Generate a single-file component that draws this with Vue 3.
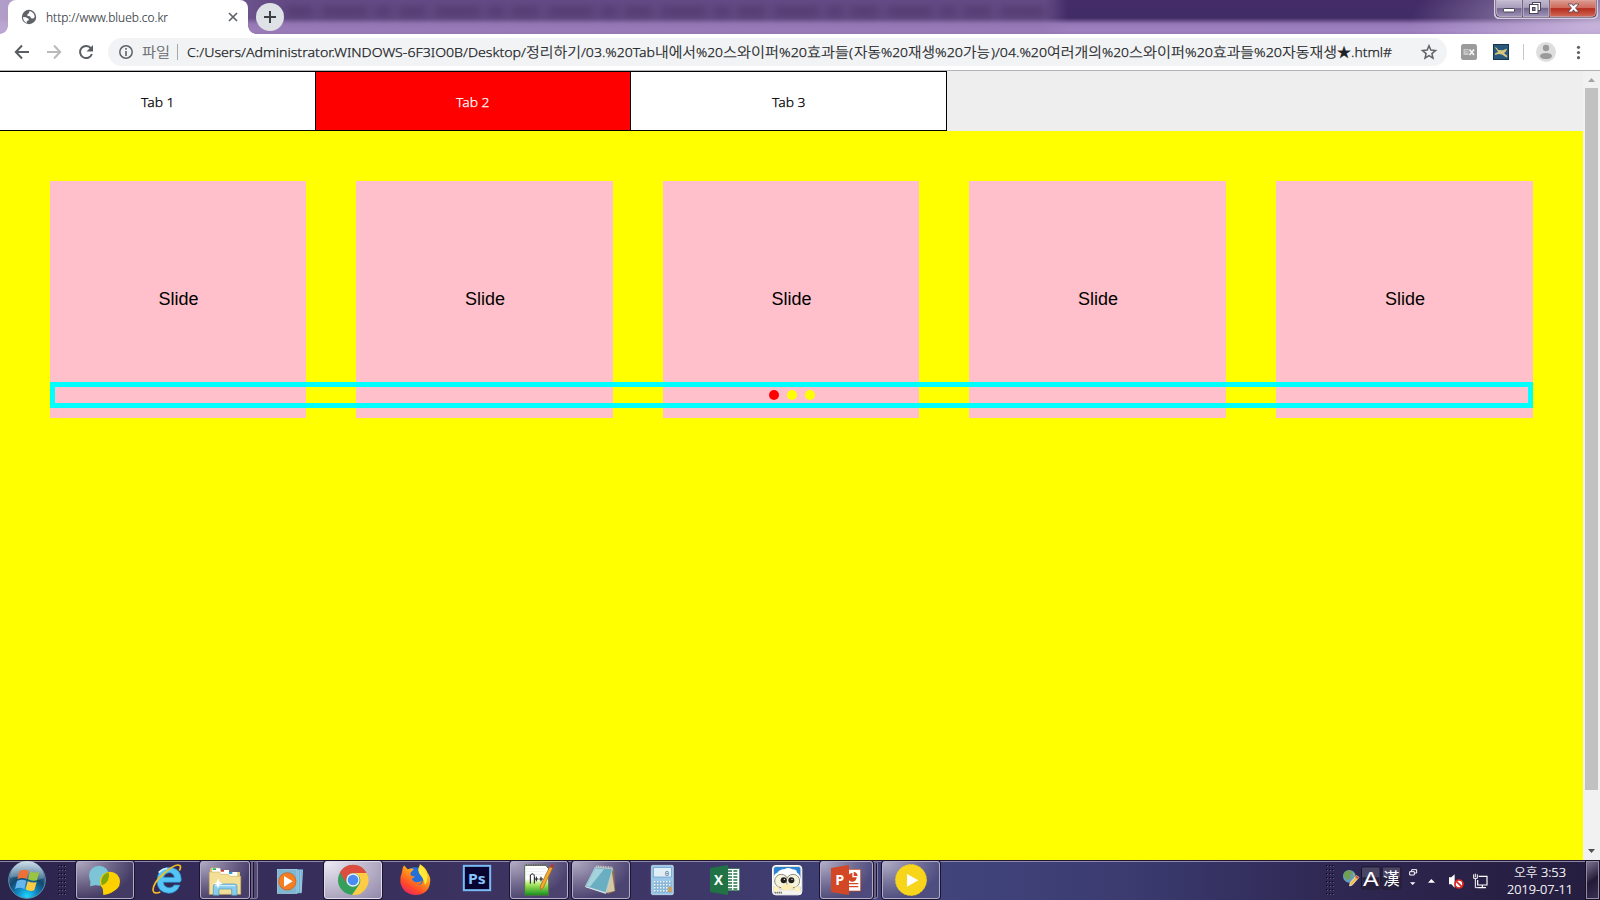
<script setup>
const urlParts = [
  ['C:/Users/Administrator.WINDOWS-6F3IO0B/Desktop/', 187, 339],
  ['정리하기', 526, 55],
  ['/03.%20Tab', 581, 74],
  ['내에서', 655, 41],
  ['%20', 696, 27],
  ['스와이퍼', 723, 56],
  ['%20', 779, 28],
  ['효과들', 807, 42],
  ['(', 849, 4],
  ['자동', 854, 27],
  ['%20', 881, 27],
  ['재생', 908, 27],
  ['%20', 935, 28],
  ['가능', 963, 27],
  [')/04.%20', 991, 56],
  ['여러개의', 1047, 55],
  ['%20', 1102, 27],
  ['스와이퍼', 1129, 56],
  ['%20', 1185, 28],
  ['효과들', 1213, 41],
  ['%20', 1254, 28],
  ['자동재생', 1282, 55],
  ['★', 1337, 14],
  ['.html#', 1351, 41],
]
const tabs = ['Tab 1', 'Tab 2', 'Tab 3']
const active = 1
const gripRows = [0, 1, 2, 3, 4, 5, 6, 7]
const gripCols = [0, 1, 2]
</script>

<template>
  <div class="screen">
    <header class="titlebar">
      <div class="glass-smudge"></div>
      <div class="browser-tab">
        <svg class="globe" width="16" height="16" viewBox="0 0 16 16">
          <circle cx="8" cy="8" r="7.2" fill="#5f6368" />
          <path d="M2 8 L5 8.3 7.8 10 7.5 11.5 5.8 12 6 14 C3.5 13 2 11 2 8Z M8.5 2 L8 4 6.3 5.5 6.5 7 9 7.2 10 9.2 12.3 9.5 13.7 8 C13.5 5 11.5 2.5 8.5 2Z" fill="#fff" />
        </svg>
        <svg class="tab-title" width="140" height="24"><text x="1" y="16.500" textLength="122" lengthAdjust="spacingAndGlyphs">http://www.blueb.co.kr</text></svg>
        <svg class="tab-close" width="10" height="10" viewBox="0 0 10 10"><path d="M1 1 9 9M9 1 1 9" stroke="#5f6368" stroke-width="1.7" /></svg>
      </div>
      <div class="new-tab"><svg width="28" height="28" viewBox="0 0 28 28"><path d="M14 8V20M8 14H20" stroke="#3c4043" stroke-width="2" /></svg></div>
      <svg class="window-controls" width="106" height="20" viewBox="0 0 106 20">
        <defs>
          <linearGradient id="ctl" x1="0" y1="0" x2="0" y2="1"><stop offset="0" stop-color="#c5bdd2" /><stop offset=".48" stop-color="#a99dbb" /><stop offset=".52" stop-color="#73658e" /><stop offset="1" stop-color="#a093b8" /></linearGradient>
          <linearGradient id="ctlClose" x1="0" y1="0" x2="0" y2="1"><stop offset="0" stop-color="#dc9b91" /><stop offset=".48" stop-color="#cf6a5c" /><stop offset=".52" stop-color="#b52c1d" /><stop offset="1" stop-color="#cf6755" /></linearGradient>
        </defs>
        <path d="M.5 0V14Q.5 18.5 5 18.5H99Q103.500 18.500 103.500 14V0" fill="#d8cee3" stroke="#d8cee3" />
        <path d="M1.500 0V13Q1.500 17.500 6 17.500H98Q102.500 17.500 102.500 13V0Z" fill="#3b2f4b" />
        <path d="M2.500 0V13Q2.500 16.500 6 16.500H28V0Z" fill="url(#ctl)" stroke="#d3c9dd" stroke-width=".7" />
        <rect x="29.300" y="-1" width="25.500" height="17.500" fill="url(#ctl)" stroke="#d3c9dd" stroke-width=".7" />
        <path d="M56 0V16.500H98Q101.500 16.500 101.500 13V0Z" fill="url(#ctlClose)" stroke="#e5b1aa" stroke-width=".7" />
        <rect x="9.500" y="8.500" width="11" height="3.500" rx=".7" fill="#fff" stroke="#4c4758" />
        <rect x="38.500" y="2.500" width="8" height="8" fill="#fff" stroke="#4c4758" />
        <rect x="35.500" y="4.500" width="8.500" height="9" fill="#fff" stroke="#4c4758" />
        <rect x="38.500" y="7.500" width="2.500" height="3" fill="#8a7da1" stroke="#4c4758" />
        <path d="M74 4h4l1.500 2L81 4h4l-3.500 4L85 12h-4l-1.500-2.200L78 12h-4l3.500-4Z" fill="#fff" stroke="#5e4450" stroke-width=".8" />
      </svg>
    </header>

    <div class="toolbar">
      <svg class="nav-icons" width="108" height="36" viewBox="0 34 108 36">
        <path d="M29 52H16.500M22 45.500 15.800 52 22 58.500" fill="none" stroke="#5a5e63" stroke-width="2" />
        <path d="M47 52H60M54 45.500 60.200 52 54 58.500" fill="none" stroke="#b9babc" stroke-width="2" />
        <path d="M91 48.300A6.100 6.100 0 1 0 91.900 54" fill="none" stroke="#5a5e63" stroke-width="2" /><path d="M93 45V51.500H86.500Z" fill="#5a5e63" />
      </svg>
      <div class="omnibox">
        <svg width="1339" height="28" viewBox="108 38 1339 28">
          <circle cx="126" cy="52" r="6.200" fill="none" stroke="#5f6368" stroke-width="1.500" />
          <path d="M126 51V56M126 48V49.700" stroke="#5f6368" stroke-width="1.600" />
          <text class="file" x="142" y="57" textLength="28" lengthAdjust="spacingAndGlyphs">파일</text>
          <path d="M177.500 44V60" stroke="#a6a8ac" />
          <text v-for="(p, i) in urlParts" :key="i" class="url" :x="p[1]" y="57" :textLength="p[2]" lengthAdjust="spacingAndGlyphs">{{ p[0] }}</text>
          <path d="M1429 45.700 1430.800 50.100 1435.500 50.500 1431.900 53.600 1433 58.200 1429 55.700 1425 58.200 1426.100 53.600 1422.500 50.500 1427.200 50.100Z" fill="none" stroke="#5f6368" stroke-width="1.500" />
        </svg>
      </div>
      <svg class="extensions" width="153" height="36" viewBox="1447 34 153 36">
        <rect x="1461" y="44" width="16" height="16" rx="2.500" fill="#9b9b9b" />
        <rect x="1463.500" y="49" width="5" height="6" fill="#c9c9c9" /><path d="M1465 50.500h3M1465 52.200h3" stroke="#999" stroke-width=".7" />
        <path d="M1469.500 49.500 1474 55M1474 49.500 1469.500 55" stroke="#f5f5f5" stroke-width="1.600" />
        <rect x="1493.500" y="44.500" width="15" height="15" fill="#28587c" stroke="#173750" />
        <path d="M1494.500 47 1497 48 1498 50 1503 50.300 1507 48.500 1506 51.500 1504 53 1507.500 56 1506.500 57.500 1502 54.500 1498.500 54 1495 55 1495 53.500 1498 52 1496.500 49.500Z" fill="#d7c77d" />
        <path d="M1523.500 44V60" stroke="#c6c8cb" />
        <circle cx="1546" cy="52" r="10" fill="#dedede" /><circle cx="1546" cy="48" r="3.200" fill="#9a9a9a" /><ellipse cx="1546" cy="56" rx="6" ry="3.100" fill="#9a9a9a" />
        <g fill="#5f6368"><circle cx="1578.500" cy="47.300" r="1.600" /><circle cx="1578.500" cy="52.500" r="1.600" /><circle cx="1578.500" cy="57.700" r="1.600" /></g>
      </svg>
    </div>

    <div class="viewport">
      <main class="page">
        <nav class="tabs">
          <a v-for="(t, i) in tabs" :key="t" class="tab" :class="{ on: i === active }"><svg width="36" height="22"><text x="1" y="16" textLength="33.500" lengthAdjust="spacingAndGlyphs">{{ t }}</text></svg></a>
        </nav>
        <section class="panel">
          <div class="swiper">
            <div v-for="n in 5" :key="n" class="slide">Slide</div>
            <div class="pagination"><i v-for="n in 3" :key="n" :class="{ on: n === 1 }"></i></div>
          </div>
        </section>
      </main>
      <aside class="scrollbar">
        <svg width="17" height="17" viewBox="0 0 17 17"><path d="M5 11 8.500 7 12 11Z" fill="#a3a3a3" /></svg>
        <div class="thumb"></div>
        <svg width="17" height="17" viewBox="0 0 17 17"><path d="M5 6 8.500 10 12 6Z" fill="#505050" /></svg>
      </aside>
    </div>

    <footer class="taskbar">
      <svg class="start" width="76" height="40" viewBox="0 30 228 120">
        <defs>
          <radialGradient id="orb" cx=".5" cy=".95" r=".9"><stop offset="0" stop-color="#1fd9ff" /><stop offset=".3" stop-color="#1189c4" /><stop offset=".6" stop-color="#12486f" /><stop offset="1" stop-color="#5f87a8" /></radialGradient>
          <linearGradient id="gloss" x1="0" y1="0" x2="0" y2="1"><stop offset="0" stop-color="#e3edf4" stop-opacity=".85" /><stop offset="1" stop-color="#b5cad9" stop-opacity=".25" /></linearGradient>
        </defs>
        <circle cx="81" cy="90" r="55" fill="url(#orb)" stroke="#5f91ae" stroke-width="3" />
        <path d="M30 84A51 51 0 0 1 132 84Q105 96 81 86 55 76 30 84Z" fill="url(#gloss)" />
        <path d="M58 64Q70 55 86 62L80 87Q67 81 52 88Z" fill="#ed7136" /><path d="M91 64Q103 71 118 65L111 91Q96 95 84 88Z" fill="#9ac540" />
        <path d="M51 93Q65 86 79 92L73 117Q59 110 45 117Z" fill="#67b7ec" /><path d="M83 94Q98 100 110 96L103 121Q89 126 77 118Z" fill="#fbcb41" />
        <g v-for="r in gripRows" :key="r"><template v-for="c in gripCols" :key="c"><rect :x="174 + c * 9" :y="45 + r * 12" width="3.500" height="3.500" fill="#0e0a20" /><rect :x="177 + c * 9" :y="48 + r * 12" width="3" height="3" fill="#6b6487" /></template></g>
      </svg>

      <div class="app open"><svg viewBox="228 30 174 120">
        <circle cx="297" cy="77" r="30" fill="#7cc5d6" /><path d="M272 91 270 109 292 104Z" fill="#7cc5d6" />
        <circle cx="330" cy="95" r="30" fill="#ffd000" /><path d="M308 112 310 135Q336 132 348 117Z" fill="#ffd000" />
        <path d="M325.500 66.500A30 30 0 0 1 305 106A30 30 0 0 1 325.500 66.500Z" fill="#86a70a" />
      </svg></div>
      <div class="app"><svg viewBox="414 30 174 120">
        <path d="M540 97H490Q493 113 508 113 518 113 523 105H540Q530 130 506 130 471 127 471 91 473 55 508 52 544 55 544 91ZM491 82H523Q520 68 507 68 494 69 491 82Z" fill="#55c5f5" stroke="#2686cb" stroke-width="2" />
        <path d="M476 68Q487 56 502 55" stroke="#c6f0ff" stroke-width="5" fill="none" />
        <path d="M481 126Q462 134 459 121 458 100 490 72 528 38 540 47 544 51 538 62" stroke="#f5bd25" stroke-width="5" fill="none" />
      </svg></div>
      <div class="app open stacked"><svg viewBox="600 30 174 120">
        <path d="M630 59 633 53H655L660 60H680L685 66H720V130H630Z" fill="#ddc474" />
        <path d="M636 55H661V76H636ZM660 60H687V81H660ZM685 66H712V84H685Z" fill="#fff" />
        <path d="M638 55h10v5h-10z" fill="#2fac4b" /><path d="M662 60h10v5h-10z" fill="#cf3b20" /><path d="M687 66h10v6h-10z" fill="#3498d2" />
        <path d="M628 66H658L663 73H685L690 79H722V133H628Z" fill="#f4df99" stroke="#d2b566" stroke-width="2" />
        <path d="M640 136V108Q641 102 648 102H704Q711 102 711 109V136H695V117H657V136Z" fill="#8acced" stroke="#4994ba" stroke-width="2" /><path d="M645 107H706" stroke="#daf5ff" stroke-width="3" />
        <path d="M655 84 658 96 669 101 658 104 654 116 650 104 640 101 650 97Z" fill="#fff" />
      </svg></div>
      <div class="app"><svg viewBox="786 30 174 120">
        <path d="M847 58H909L904 130H847Z" fill="#68a7cb" /><path d="M895 60V128M901 60V128M907 60 904 128" stroke="#b9e1f1" stroke-width="2" />
        <rect x="832" y="58" width="59" height="72" fill="#80b6d0" stroke="#aadbec" stroke-width="2" /><circle cx="862" cy="94" r="26" fill="#f67e22" stroke="#c95b15" stroke-width="2" />
        <path d="M852 78V110L878 94Z" fill="#fff" />
      </svg></div>
      <div class="app open current"><svg viewBox="12 30 174 120">
        <circle cx="99" cy="90" r="45" fill="#35a05c" /><path d="M60 67A45 45 0 0 1 140 70H99A22 22 0 0 0 79 101Z" fill="#dc4c3f" />
        <path d="M140 69A45 45 0 0 1 96 135L119 101A23 23 0 0 0 101 69Z" fill="#ffcc46" />
        <circle cx="99" cy="90" r="20" fill="#eef3fa" /><circle cx="99" cy="90" r="16" fill="#4b8bf4" />
      </svg></div>
      <div class="app"><svg viewBox="198 30 174 120">
        <defs><linearGradient id="fox" x1=".8" y1="0" x2=".2" y2="1"><stop offset="0" stop-color="#ffec39" /><stop offset=".4" stop-color="#ff9a16" /><stop offset=".75" stop-color="#ff472d" /><stop offset="1" stop-color="#e8206d" /></linearGradient></defs>
        <circle cx="285" cy="85" r="33" fill="#246fd9" />
        <path d="M246 66Q247 53 252 46L263 58Q275 54 282 57L271 69 273 77 285 80 275 87Q281 98 294 97 303 95 306 91 303 103 291 105 311 107 309 84 307 70 294 61 302 50 299 42 318 53 323 69 333 82 330 98 326 132 287 135 248 133 241 96 240 80 246 66Z" fill="url(#fox)" />
        <path d="M300 44Q317 57 322 77 323 94 315 106 313 88 301 75 290 61 300 44Z" fill="#ffe936" />
      </svg></div>
      <div class="app"><svg viewBox="384 30 174 120">
        <rect x="431.500" y="47.500" width="79" height="73" fill="#090330" stroke="#79bbf5" stroke-width="6" /><text x="444" y="102" class="ps" textLength="53" lengthAdjust="spacingAndGlyphs">Ps</text>
      </svg></div>
      <div class="app open"><svg viewBox="570 30 174 120">
        <defs><linearGradient id="npp" x1="0" y1="0" x2="0" y2="1"><stop offset=".45" stop-color="#fff" /><stop offset=".65" stop-color="#a5e45c" /><stop offset="1" stop-color="#12911c" /></linearGradient></defs>
        <path d="M614 46H677L686 56V136H614Z" fill="url(#npp)" stroke="#556b4b" stroke-width="3" /><path d="M618 45h60" stroke="#5b5b5b" stroke-width="5" stroke-dasharray="3 4" />
        <path d="M618 57H678M618 65H678M618 73H678" stroke="#b8c9cb" />
        <path d="M631 101V75Q642 66 643 79V101M644 87H655M649 80V94M658 87H669M663 80V94" fill="none" stroke="#171717" stroke-width="3" />
        <path d="M689 50 698 54 670 113 661 120 661 108Z" fill="#f6a829" stroke="#99611f" stroke-width="2" /><path d="M690 49 696 42 702 46 698 54Z" fill="#b83639" />
      </svg></div>
      <div class="app open"><svg viewBox="756 30 174 120">
        <path d="M826 54 882 56 886 123 864 132Z" fill="#8d7151" /><path d="M875 60 884 123 857 129Z" fill="#d5c8a8" />
        <path d="M826 51 878 56 857 128 796 109Z" fill="#69afc1" stroke="#c0dce1" stroke-width="2" /><path d="M826 55 852 58 810 110 799 107Z" fill="#c5e6ea" opacity=".65" />
        <path d="M796 109 857 128 859 132 797 112Z" fill="#e8f4f2" /><path d="M829 50 878 54" stroke="#ccc9c0" stroke-width="8" stroke-dasharray="3 2" />
      </svg></div>
      <div class="app"><svg viewBox="-18 30 174 120">
        <rect x="34" y="46" width="66" height="88" rx="4" fill="#9ac8e8" stroke="#cfe7f6" stroke-width="2" /><rect x="40" y="53" width="54" height="28" fill="#e0eef6" stroke="#6499c1" stroke-width="2" />
        <text x="74" y="79" class="digit">0</text>
        <g fill="#628eb1"><template v-for="r in 4" :key="r"><rect v-for="c in 6" :key="c" :x="33 + c * 9" :y="84 + r * 9" width="7" height="7" /></template></g>
        <g fill="#eef8ff"><template v-for="r in 4" :key="r"><rect v-for="c in 6" :key="c" :x="33 + c * 9" :y="84 + r * 9" width="5" height="5" /></template></g>
        <rect x="86" y="111" width="8" height="15" fill="#f09a2b" />
      </svg></div>
      <div class="app"><svg viewBox="168 30 174 120">
        <rect x="256" y="56" width="43" height="66" fill="#fff" stroke="#217346" stroke-width="2" /><path d="M264 63h12m4 0h12M264 72h12m4 0h12M264 81h12m4 0h12M264 90h12m4 0h12M264 99h12m4 0h12M264 108h12m4 0h12M264 117h12m4 0h12" stroke="#217346" stroke-width="5" />
        <path d="M210 54 264 45V135L210 126Z" fill="#217346" /><text x="222" y="106" class="office" textLength="27" lengthAdjust="spacingAndGlyphs">X</text>
      </svg></div>
      <div class="app"><svg viewBox="354 30 174 120">
        <rect x="397.500" y="46.500" width="88" height="88" rx="10" fill="#dedfd9" stroke="#fff" stroke-width="3" /><rect x="402" y="51" width="79" height="56" rx="5" fill="#2c83d1" />
        <path d="M400 86Q402 70 412 68 420 57 435 57 443 50 457 58 470 58 471 68 481 73 483 91V109H400Z" fill="#fff" />
        <circle cx="424" cy="93" r="20" fill="#f6f3dd" stroke="#8f8b7e" stroke-width="3" /><circle cx="459" cy="93" r="20" fill="#f6f3dd" stroke="#8f8b7e" stroke-width="3" />
        <circle cx="431" cy="91" r="9" fill="#23201e" /><circle cx="454" cy="91" r="9" fill="#23201e" /><circle cx="433" cy="88" r="2" fill="#fff" /><circle cx="456" cy="88" r="2" fill="#fff" />
        <ellipse cx="441" cy="112" rx="18" ry="9" fill="#fbedb0" /><rect x="401" y="121" width="81" height="12" fill="#f4f4f0" /><path d="M404 128h22" stroke="#333" stroke-width="5" stroke-dasharray="3 3" />
        <circle cx="409" cy="117" r="8" fill="#fff2bd" /><circle cx="472" cy="117" r="8" fill="#fff2bd" />
      </svg></div>
      <div class="app open stacked ppt"><svg viewBox="540 30 174 120">
        <rect x="617" y="58" width="45" height="65" fill="#fff" stroke="#d24726" stroke-width="2" /><path d="M637 69A13 13 0 1 0 650 82H637Z" fill="#d24726" /><path d="M641 66A13 13 0 0 1 653 78H641Z" fill="#d24726" /><path d="M627 101H655M627 110H655" stroke="#d24726" stroke-width="4" />
        <path d="M573 54 627 45V135L573 126Z" fill="#d24726" /><text x="586" y="106" class="office" textLength="27" lengthAdjust="spacingAndGlyphs">P</text>
      </svg></div>
      <div class="app open"><svg viewBox="726 30 174 120">
        <circle cx="813" cy="90" r="46.500" fill="#f7d51b" stroke="#f7d51b" stroke-width="2" stroke-dasharray="8 3" /><path d="M801 72V110L835 91Z" fill="#fff" />
      </svg></div>

      <div class="spacer"></div>
      <svg class="tray" width="180" height="40" viewBox="60 240 540 120">
        <g v-for="r in gripRows" :key="r"><template v-for="c in gripCols" :key="c"><rect :x="78 + c * 9" :y="255 + r * 12" width="3.500" height="3.500" fill="#0e0a20" /><rect :x="81 + c * 9" :y="258 + r * 12" width="3" height="3" fill="#5c5774" /></template></g>
        <circle cx="148" cy="289" r="19" fill="#679bbb" /><path d="M130 284Q136 270 151 271L158 280 149 284 153 294 142 301Z" fill="#6fa151" /><path d="M158 276 166 286 160 292Z" fill="#95b25b" />
        <path d="M169 287 177 292 157 315 149 318 150 309Z" fill="#f4bd3e" stroke="#fff" stroke-width="2" /><path d="M169 287 177 292 173 297 165 291Z" fill="#d4553e" />
        <rect x="184.500" y="260.500" width="56" height="66" rx="5" fill="#4b4564" stroke="#191429" stroke-width="3" /><rect x="246.500" y="260.500" width="56" height="66" rx="5" fill="#4b4564" stroke="#191429" stroke-width="3" />
        <path d="M187 292H238V324H187ZM249 292H300V324H249Z" fill="#28213d" />
        <text x="189" y="317" class="ime" textLength="47" lengthAdjust="spacingAndGlyphs">A</text><text x="249" y="314" class="han" textLength="50" lengthAdjust="spacingAndGlyphs">漢</text>
        <path d="M335 274V269H350V279H344M329 275H343V285H329Z" fill="none" stroke="#fff" stroke-width="3" /><path d="M330 307H346L338 315Z" fill="#fff" />
        <path d="M384 308 394 297 405 308Z" fill="#fff" />
        <path d="M447 292H454L464 283V323L454 313H447Z" fill="#fff" /><circle cx="477" cy="312" r="12" fill="#fff" stroke="#df251d" stroke-width="5" /><path d="M469 304 485 320" stroke="#df251d" stroke-width="5" />
        <path d="M536 289H561V315H533V300M547 315V323M535 323H558" fill="none" stroke="#fff" stroke-width="3.500" /><path d="M521 283V295H532V283M526 281V291M526 295V323H537" fill="none" stroke="#fff" stroke-width="3" />
      </svg>
      <svg class="clock" width="80" height="40" viewBox="1500 860 80 40">
        <text x="1514" y="877" textLength="52" lengthAdjust="spacingAndGlyphs">오후 3:53</text>
        <text x="1507" y="894" textLength="66" lengthAdjust="spacingAndGlyphs">2019-07-11</text>
      </svg>
      <div class="show-desktop"></div>
    </footer>
  </div>
</template>

<style>
html, body { margin: 0; overflow: hidden; }
</style>

<style scoped>
* { box-sizing: border-box; }
.screen { width: 1600px; height: 900px; display: flex; flex-direction: column; overflow: hidden; font-family: "Noto Sans", "Noto Sans CJK KR", sans-serif; font-weight: 300; }
.titlebar { position: relative; height: 34px; flex: none; display: flex; overflow: hidden; padding-left: 8px;
  background: radial-gradient(ellipse 190px 60px at 1600px 20px, #e0d2edb0, #e0d2ed00), linear-gradient(90deg, #c5b2dacc, #bda6d600 270px), linear-gradient(90deg, #9073ac70 1045px, #9073ac00 1068px), linear-gradient(#432c68 0, #422c66 18px, #9577b7 24px, #9e81c0 30px, #9879b9 34px); }
.glass-smudge { position: absolute; left: 285px; top: 6px; width: 765px; height: 11px; filter: blur(4px); opacity: .28;
  background: repeating-linear-gradient(90deg, #2c1b45 0 29px, transparent 29px 36px, #2c1b45 36px 83px, transparent 83px 89px, #2c1b45 89px 107px, transparent 107px 113px); }
.browser-tab { position: relative; width: 240px; height: 34px; background: #fff; border-radius: 8px 8px 0 0; display: flex; align-items: center; padding: 0 12px 0 12px; }
.browser-tab::before, .browser-tab::after { content: ""; position: absolute; bottom: 0; width: 8px; height: 8px; }
.browser-tab::before { left: -8px; background: radial-gradient(circle at 0 0, transparent 7.5px, #fff 8px); }
.browser-tab::after { right: -8px; background: radial-gradient(circle at 100% 0, transparent 7.5px, #fff 8px); }
.globe { flex: none; margin-left: 1px; }
.tab-title { margin: 0 44px 0 7px; font-size: 12px; fill: #303338; stroke: #505358; stroke-width: .15; flex: none; overflow: visible; }
.tab-title text { transform: translateX(1px); }
.tab-close { flex: none; }
.new-tab { position: relative; width: 28px; height: 28px; margin: 3px 0 0 8px; border-radius: 50%; background: #dee1e6; }
.new-tab svg, .omnibox svg { display: block; }
.window-controls { position: relative; margin-left: auto; }
.toolbar { height: 37px; flex: none; display: flex; background: #fff; border-bottom: 1px solid #b2b1b3; }
.omnibox { width: 1339px; height: 28px; margin-top: 4px; border-radius: 14px; background: #f1f3f4; }
.url, .file { font-size: 13.5px; fill: #202124; stroke: #202124; stroke-width: .25; }
.file { fill: #5f6368; stroke: #5f6368; }
.viewport { height: 789px; flex: none; display: flex; }
.page { width: 1583px; background: #eee; display: flex; flex-direction: column; }
.tabs { height: 60px; width: 947px; flex: none; display: grid; grid-template-columns: 316px 315px 316px; border-top: 1px solid #000; border-bottom: 1px solid #000; }
.tab { display: flex; align-items: center; justify-content: center; padding-top: 1px; background: #fff; border-right: 1px solid #000; font-size: 13.5px; fill: #000; stroke: #000; stroke-width: .25; }
.tab.on { background: #f00; fill: #fff; stroke: #fff; }
.panel { flex: 1; background: #ff0; padding: 50px; }
.swiper { position: relative; height: 237px; display: grid; grid-template-columns: 256px 257px 256px 257px 257px; gap: 50px; }
.slide { background: pink; display: flex; align-items: center; justify-content: center; padding-left: 1px; font: 18px "Liberation Sans", Arial, sans-serif; color: #000; }
.pagination { position: absolute; left: 0; right: 0; bottom: 10px; height: 26px; border: 5px solid #0ff; display: flex; justify-content: center; align-items: center; gap: 8px; }
.pagination i { width: 10px; height: 10px; border-radius: 50%; background: #ff0; }
.pagination i.on { background: #f00; }
.scrollbar { width: 17px; background: #f1f1f1; display: flex; flex-direction: column; }
.scrollbar svg { flex: none; }
.thumb { height: 702px; margin: 0 2px auto; background: #c1c1c1; width: 13px; }
.taskbar { height: 40px; flex: none; display: flex; background: linear-gradient(#1e1738 0, #1e1738 1px, #8e86a8 1px, #8e86a8 2px, transparent 2px), linear-gradient(90deg, #2b244b 0, #362c5a 220px, #3d3361 500px, #3e3869 700px, #41457c 930px, #3b3b70 1130px, #2f2853 1330px, #282044 1500px, #251e40); }
.start { flex: none; }
.app { position: relative; width: 58px; height: 40px; margin-right: 4px; flex: none; }
.app svg { position: relative; display: block; width: 58px; height: 40px; }
.app.open::before { content: ""; position: absolute; inset: 1px 0; border: 1px solid #b2acc7; border-radius: 3px; box-shadow: 0 0 0 1px #1c1532; background: radial-gradient(ellipse at 0 0, #d7d2e3bb, #aaa2bd66 45%, transparent 75%), #6c638850; }
.app.current::before { background: radial-gradient(ellipse at 0 0, #edeaf4, #bbb5cb 55%, #9288a9); border-color: #e1dce9; }
.app.stacked::before { right: 8px; }
.app.stacked::after { content: ""; position: absolute; top: 1px; bottom: 1px; right: 0; width: 7px; border: solid #867d9f; border-width: 1px 1px 1px 0; border-radius: 0 3px 3px 0; background: linear-gradient(90deg, #1c1532 1px, #685f84 1px, #685f84 3px, #1c1532 3px, #1c1532 4px, #544b73 4px); }
.app.ppt::before { right: 5px; }
.app.ppt::after { width: 4px; }
.ps { font: bold 40px "Noto Sans", sans-serif; fill: #86c4fa; }
.office { font: bold 40px "Open Sans", sans-serif; fill: #fff; }
.digit { font: 22px "Liberation Mono", monospace; fill: #406482; }
.ime { font: 62px "Liberation Sans", sans-serif; fill: #fff; }
.han { font: 51px "Noto Sans CJK TC", sans-serif; fill: #fff; }
.spacer { flex: 1; }
.tray { flex: none; }
.clock { flex: none; font-size: 12.500px; fill: #fff; stroke: #fff; stroke-width: .2; margin-right: 6px; }
.show-desktop { width: 13px; height: 38px; margin: 1px 1px 0 0; border: 1px solid #938aa8; background: linear-gradient(145deg, #79718e, #302843 45%, #211936 50%, #3a3151); box-shadow: 0 0 0 1px #171126; flex: none; }
</style>
